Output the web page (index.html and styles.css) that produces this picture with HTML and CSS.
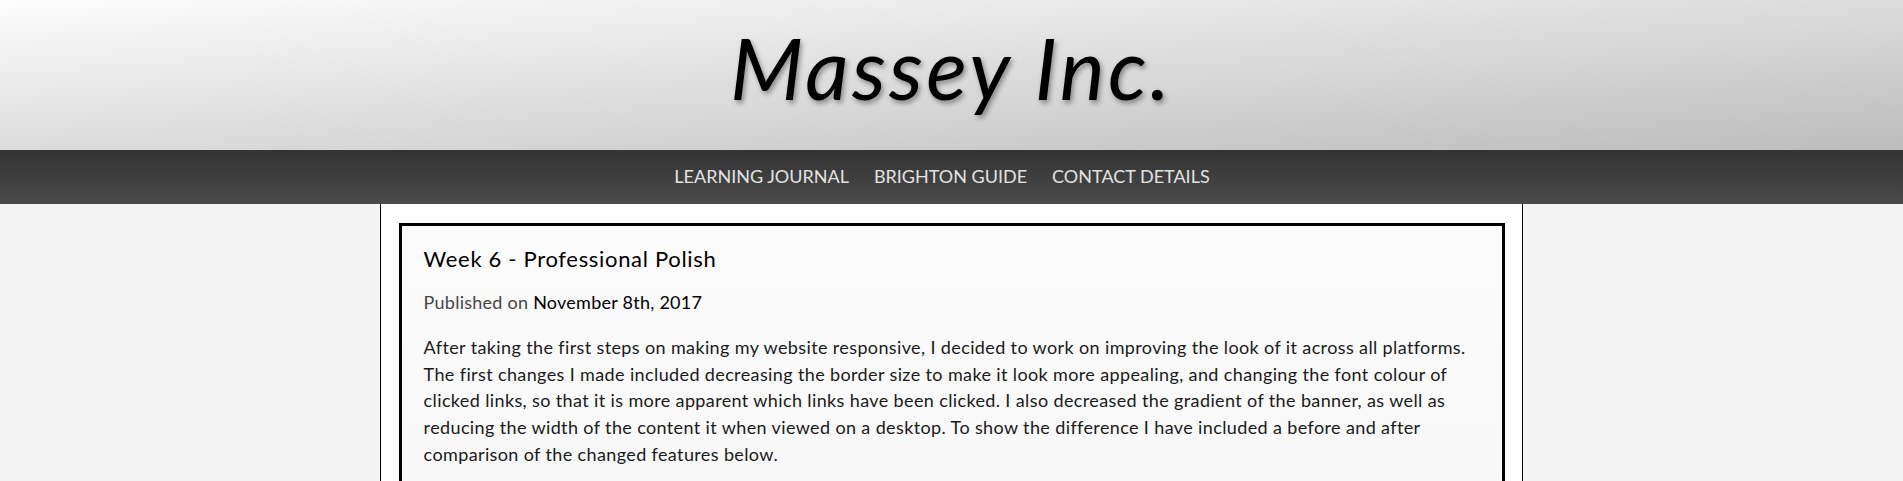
FILE: index.html
```html
<!DOCTYPE html>
<html lang="en">
<head>
<meta charset="utf-8">
<title>Massey Inc.</title>
<link rel="stylesheet" href="styles.css">
</head>
<body>
<header class="banner">
  <h1 class="site-title">Massey Inc.</h1>
</header>
<nav class="main-nav">
  <ul class="nav-list">
    <li><a class="nav-link" href="#">Learning Journal</a></li>
    <li><a class="nav-link" href="#">Brighton Guide</a></li>
    <li><a class="nav-link" href="#">Contact Details</a></li>
  </ul>
</nav>
<main class="column">
  <article class="entry">
    <h2 class="entry-title">Week 6 - Professional Polish</h2>
    <p class="entry-meta">Published on <span class="entry-date">November 8th, 2017</span></p>
    <p class="entry-text">After taking the first steps on making my website responsive, I decided to work on improving the look of it across all platforms. The first changes I made included decreasing the border size to make it look more appealing, and changing the font colour of clicked links, so that it is more apparent which links have been clicked. I also decreased the gradient of the banner, as well as reducing the width of the content it when viewed on a desktop. To show the difference I have included a before and after comparison of the changed features below.</p>
  </article>
</main>
</body>
</html>
```
FILE: styles.css
```css
html, body {
  margin: 0;
  padding: 0;
}
body {
  background: #f4f4f4;
  font-family: "Lato", "Liberation Sans", sans-serif;
  color: #111;
}
.banner {
  height: 150px;
  box-sizing: border-box;
  padding-top: 25px;
  background: linear-gradient(to bottom right, #fdfdfd, #bcbcbc);
  text-align: center;
}
.site-title {
  margin: 0;
  font-family: "Lato", sans-serif;
  font-style: italic;
  font-weight: 400;
  font-size: 85px;
  line-height: 85px;
  letter-spacing: 3.2px;
  color: #000;
  text-shadow: 2px 3px 5px rgba(0, 0, 0, 0.38);
}
.main-nav {
  height: 54px;
  background: linear-gradient(#333333, #4a4a4a);
}
.nav-list {
  list-style: none;
  margin: 0;
  padding: 0 19px 0 0;
  display: flex;
  justify-content: center;
  gap: 25px;
}
.nav-link {
  display: block;
  line-height: 52px;
  font-size: 18px;
  text-transform: uppercase;
  text-decoration: none;
  color: #e2e2e2;
}
.column {
  box-sizing: border-box;
  width: calc(60% + 2px);
  margin: 0 auto;
  min-height: 400px;
  background: #fff;
  border-left: 1px solid #000;
  border-right: 1px solid #000;
  padding: 19px 17px 20px 18px;
}
.entry {
  border: 3px solid #000;
  background: linear-gradient(#fbfbfb, #f8f8f8);
  padding: 19px 22px 30px 22px;
}
.entry-title {
  margin: 0 0 17px;
  font-size: 22px;
  font-weight: 400;
  letter-spacing: 0.68px;
  line-height: normal;
  color: #000;
}
.entry-meta {
  margin: 0 0 18px;
  font-size: 18px;
  line-height: 27px;
  letter-spacing: 0.25px;
  color: #444;
}
.entry-date {
  color: #000;
}
.entry-text {
  margin: 0;
  font-size: 18px;
  line-height: 26.7px;
  letter-spacing: 0.375px;
  color: #1a1a1a;
}
```
